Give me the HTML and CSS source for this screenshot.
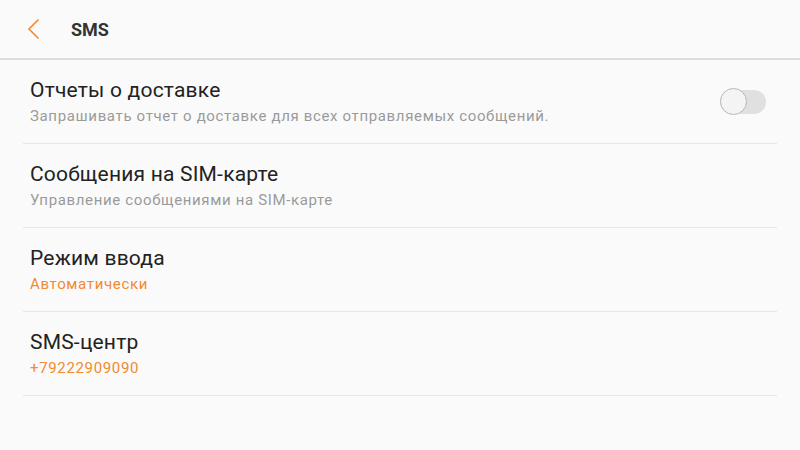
FILE: index.html
```html
<!DOCTYPE html>
<html lang="ru">
<head>
    <meta charset="UTF-8">
    <meta name="viewport" content="width=device-width, initial-scale=1.0">
    <title>SMS</title>
    <link rel="stylesheet" href="styles.css">
</head>
<body>
    <div class="top-bar">
        <button class="back-btn" aria-label="Назад">
            <svg width="14" height="22" viewBox="0 0 14 22">
                <path d="M11.5 1.5 L2 11 L11.5 20.5" fill="none" stroke="#f28a2e" stroke-width="1.6"/>
            </svg>
        </button>
        <h1>SMS</h1>
    </div>

    <div class="settings-list">
        <div class="setting-row">
            <div class="setting-text">
                <div class="setting-title">Отчеты о доставке</div>
                <div class="setting-sub">Запрашивать отчет о доставке для всех отправляемых сообщений.</div>
            </div>
            <div class="switch">
                <div class="switch-thumb"></div>
            </div>
        </div>

        <div class="setting-row">
            <div class="setting-text">
                <div class="setting-title">Сообщения на SIM-карте</div>
                <div class="setting-sub">Управление сообщениями на SIM-карте</div>
            </div>
        </div>

        <div class="setting-row">
            <div class="setting-text">
                <div class="setting-title">Режим ввода</div>
                <div class="setting-sub accent">Автоматически</div>
            </div>
        </div>

        <div class="setting-row">
            <div class="setting-text">
                <div class="setting-title">SMS-центр</div>
                <div class="setting-sub accent">+79222909090</div>
            </div>
        </div>
    </div>
</body>
</html>
```

FILE: styles.css
```css
*{
    margin: 0;
    padding: 0;
    box-sizing: border-box;
}

body{
    background-color: #fafafa;
    font-family: Roboto, "Noto Sans", sans-serif;
    color: #222;
    width: 800px;
    height: 450px;
    overflow: hidden;
}

.top-bar{
    height: 60px;
    display: flex;
    align-items: center;
    border-bottom: 2px solid #dcdcdc;
}

.back-btn{
    width: 40px;
    margin-left: 27px;
    background: none;
    border: none;
    display: flex;
    align-items: center;
}

.top-bar h1{
    margin-left: 4px;
    font-size: 18px;
    font-weight: 700;
    color: #333;
}

.settings-list{
    padding: 0 23px;
}

.setting-row{
    height: 84px;
    display: flex;
    align-items: center;
    border-bottom: 1px solid #e6e6e6;
    padding: 0 11px 0 7px;
}

.setting-text{
    flex: 1;
}

.setting-title{
    font-size: 21px;
    line-height: 24px;
    letter-spacing: 0.2px;
    color: #222;
}

.setting-sub{
    margin-top: 5px;
    font-size: 15px;
    line-height: 18px;
    letter-spacing: 0.65px;
    color: #9a9a9a;
}

.setting-sub.accent{
    color: #f28a2e;
}

.switch{
    width: 46px;
    height: 24px;
    border-radius: 12px;
    background-color: #e0e0e0;
    display: flex;
    align-items: center;
}

.switch-thumb{
    width: 27px;
    height: 27px;
    border-radius: 50%;
    background-color: #f4f4f4;
    border: 1px solid #b8b8b8;
}
```
